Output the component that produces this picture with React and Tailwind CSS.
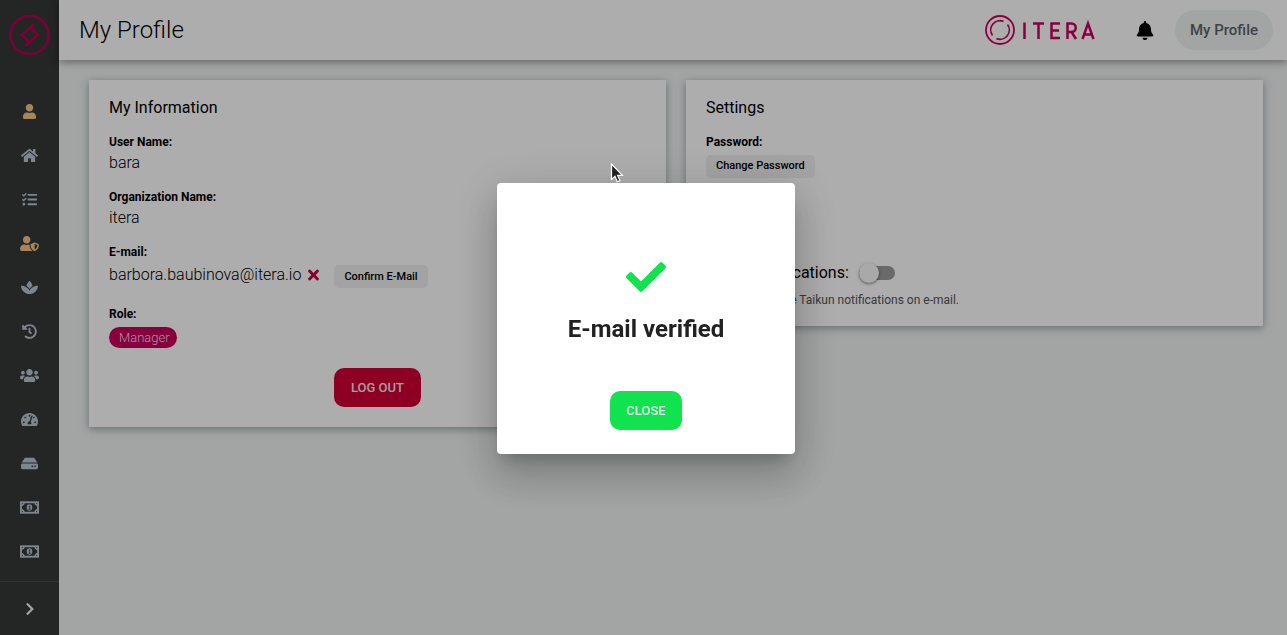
import { FaUser, FaHome, FaTasks, FaUserShield, FaHistory, FaUsers, FaTachometerAlt, FaHdd, FaBell, FaTimes, FaCheck, FaChevronRight } from 'react-icons/fa';

function Spa(props) {
  return (
    <svg viewBox="0 0 576 512" fill="currentColor" {...props}>
      <path d="M568.25 192c-29.04.13-135.01 6.16-213.84 83-33.12 29.63-53.36 63.3-66.41 94.86-13.05-31.56-33.29-65.23-66.41-94.86-78.83-76.84-184.8-82.87-213.84-83-4.41-.02-7.79 3.4-7.75 7.82.23 27.92 7.14 126.14 88.77 199.3C172.79 480.94 256 480 288 480s115.19.95 199.23-80.88c81.64-73.17 88.54-171.38 88.77-199.3.04-4.42-3.34-7.84-7.75-7.82zM287.98 302.6c12.82-18.85 27.6-35.78 44.09-50.52 19.09-18.61 39.58-33.3 60.26-45.18-16.44-70.5-51.72-133.05-96.73-172.22-4.11-3.58-11.02-3.58-15.14 0-44.99 39.14-80.27 101.63-96.74 172.07 20.37 11.7 40.5 26.14 59.22 44.39a282.768 282.768 0 0 1 45.04 51.46z" />
    </svg>
  );
}

function Money(props) {
  return (
    <svg viewBox="0 0 20 13" fill="none" stroke="currentColor" {...props}>
      <rect x="1" y="1" width="18" height="11" strokeWidth="2" />
      <path d="M1.500 4.200a3 3 0 0 0 2.700-2.700M18.500 4.200a3 3 0 0 1-2.700-2.700M1.500 8.800a3 3 0 0 1 2.700 2.700M18.500 8.800a3 3 0 0 0-2.700 2.700" strokeWidth="1.500" />
      <ellipse cx="10" cy="6.500" rx="2.900" ry="3.400" fill="currentColor" stroke="none" />
      <path d="M9.200 5.200 10.200 4.700V8.300M9 8.400h2.200" stroke="#353837" strokeWidth="0.900" />
    </svg>
  );
}

const navItems = [
  { label: 'Profile', Icon: FaUser, size: 'h-[15px] w-[15px]', active: true },
  { label: 'Home', Icon: FaHome, size: 'h-[17px] w-[17px]' },
  { label: 'Projects', Icon: FaTasks, size: 'h-[15px] w-[15px]' },
  { label: 'Access', Icon: FaUserShield, size: 'h-[15px] w-[19px]', active: true },
  { label: 'Catalog', Icon: Spa, size: 'h-[15px] w-[17px]' },
  { label: 'History', Icon: FaHistory, size: 'h-[15px] w-[15px]' },
  { label: 'Users', Icon: FaUsers, size: 'h-[15px] w-[19px]' },
  { label: 'Quotas', Icon: FaTachometerAlt, size: 'h-[17px] w-[17px]' },
  { label: 'Storage', Icon: FaHdd, size: 'h-[17px] w-[17px]' },
  { label: 'Billing', Icon: Money, size: 'h-[13px] w-[19px]' },
  { label: 'Prices', Icon: Money, size: 'h-[13px] w-[19px]' },
];

function Sidebar() {
  return (
    <aside className="flex w-[59px] shrink-0 flex-col bg-[#353837] text-[#bac5d0]">
      <a href="#" aria-label="Taikun" className="mx-auto mt-[14px] block">
        <svg className="h-[42px] w-[41px]" viewBox="0 0 42 42" fill="none" stroke="#b80052">
          <circle cx="21" cy="21" r="19.500" strokeWidth="2.600" />
          <path d="M25.500 10 21.500 13.500 13 20.800 20 27.500M17 32 21 28.500 29.500 20.800 22.500 14" strokeWidth="2.600" />
        </svg>
      </a>
      <nav className="mt-[33px] flex flex-col">
        {navItems.map(({ label, Icon, size, active }) => (
          <a key={label} href="#" aria-label={label} className={`flex h-11 items-center justify-center ${active ? 'text-[#f4c587]' : ''}`}>
            <Icon className={size} />
          </a>
        ))}
      </nav>
      <button aria-label="Expand menu" className="mt-auto flex h-[54px] items-center justify-center border-t border-[#464a4a] text-[#eef2f6]">
        <FaChevronRight className="h-[14px] w-[14px]" />
      </button>
    </aside>
  );
}

function IteraLogo() {
  return (
    <svg className="h-[30px] w-[110px]" viewBox="0 0 110 30" fill="none" stroke="#cc005c" role="img" aria-label="Itera">
      <circle cx="15" cy="15" r="14" strokeWidth="1.800" />
      <path d="M18.500 6.400A9.300 9.300 0 0 0 7.500 20.500M11.500 23.600A9.300 9.300 0 0 0 22.500 9.500" strokeWidth="1.700" />
      <path d="M39.500 7.500v16.500M48 8.500h11M53.500 8.500v15.500M75 8.500h-8.500v14.500H75M66.500 15.500h7.500M82.500 24V8.500h4a4 4 0 0 1 0 8.500h-4M86.500 17l4.500 7M97.500 24l5.500-15.500L108.500 24M99.500 19.500h7" strokeWidth="2.500" />
    </svg>
  );
}

function Header() {
  return (
    <header className="z-10 flex h-15 shrink-0 items-center bg-white pr-[14px] pl-5 shadow-[0_2px_8px_rgba(0,0,0,0.4)]">
      <h1 className="text-2xl font-light text-black">My Profile</h1>
      <div className="ml-auto flex items-center">
        <IteraLogo />
        <button aria-label="Notifications" className="ml-[41px] text-black">
          <FaBell className="h-[19px] w-[18px]" />
        </button>
        <button className="ml-[21px] h-10 rounded-full bg-[#f0f3f4] px-[15px] text-[15px] font-medium text-[#5c6466]">My Profile</button>
      </div>
    </header>
  );
}

function Card({ title, children }) {
  return (
    <section className="bg-white px-5 pt-4 shadow-[0_2px_8px_rgba(60,80,80,0.5)]">
      <h2 className="text-base leading-6 text-black">{title}</h2>
      {children}
    </section>
  );
}

const termStyle = 'text-xs leading-4 font-bold text-black';
const valueStyle = 'text-base leading-6 font-light text-black';
const smallButton = 'h-[23px] rounded-[5px] bg-[#f0f0f0] px-[10px] text-[11px] font-medium text-black';

function Information() {
  return (
    <Card title="My Information">
      <dl className="mt-[14px] flex flex-col gap-[14px]">
        <div>
          <dt className={termStyle}>User Name:</dt>
          <dd className={`${valueStyle} pt-px`}>bara</dd>
        </div>
        <div>
          <dt className={termStyle}>Organization Name:</dt>
          <dd className={`${valueStyle} pt-px`}>itera</dd>
        </div>
        <div>
          <dt className={termStyle}>E-mail:</dt>
          <dd className={`${valueStyle} flex items-start pt-[3px]`}>
            barbora.baubinova@itera.io
            <FaTimes className="mt-[4px] ml-[6px] h-4 w-[13px] text-[#c80046]" aria-label="Not verified" />
            <button className={`${smallButton} mt-[2px] mb-[4px] ml-[14px]`}>Confirm E-Mail</button>
          </dd>
        </div>
        <div>
          <dt className={termStyle}>Role:</dt>
          <dd className="pt-[5px]">
            <span className="flex h-[21px] w-fit items-center rounded-full bg-[#c8005a] pr-[7px] pl-[10px] text-[13px] font-light text-[#ffd6ea]">Manager</span>
          </dd>
        </div>
      </dl>
      <div className="flex justify-center py-5">
        <button className="h-[39px] rounded-[10px] bg-[#d20034] px-[17px] text-[13px] font-medium text-[#fbe3ea]">LOG OUT</button>
      </div>
    </Card>
  );
}

function Settings() {
  return (
    <Card title="Settings">
      <div className="mt-[14px] text-xs leading-4 font-bold text-black">Password:</div>
      <button className={`${smallButton} mt-[5px] block`}>Change Password</button>
      <label className="mt-[83px] flex items-center text-base leading-6 text-black">
        E-mail Notifications:
        <input type="checkbox" role="switch" className="peer sr-only" />
        <span className="ml-[10px] flex h-5 w-9 items-center">
          <span className="flex h-[14px] w-full items-center rounded-full bg-[#9c9c9c]">
            <span className="h-5 w-5 rounded-full bg-[#fafafa] shadow-[0_1px_3px_rgba(0,0,0,0.5)]" />
          </span>
        </span>
      </label>
      <p className="pt-[7px] pb-[18px] text-xs leading-4 text-[#555]">Enable to receive Taikun notifications on e-mail.</p>
    </Card>
  );
}

function VerifiedDialog() {
  return (
    <div className="fixed inset-0 z-20 flex items-center justify-center bg-black/32 pt-0.5 pl-[5px]">
      <div role="dialog" aria-modal="true" aria-labelledby="dialog-title" className="flex w-[298px] flex-col items-center rounded bg-white pt-[74px] pb-6 shadow-[0_11px_15px_-7px_rgba(0,0,0,0.2),0_24px_38px_3px_rgba(0,0,0,0.14),0_9px_46px_8px_rgba(0,0,0,0.12)]">
        <FaCheck className="h-10 w-10 text-[#11e34f]" />
        <h2 id="dialog-title" className="mt-4 text-2xl leading-8 font-bold text-[#212121]">E-mail verified</h2>
        <button className="mt-[46px] h-[39px] rounded-[10px] bg-[#11e34f] px-4 text-[13px] font-medium text-[#e6fced]">CLOSE</button>
      </div>
    </div>
  );
}

export default function App() {
  return (
    <div className="flex min-h-screen bg-[#f0f3f3] font-[Roboto,sans-serif]">
      <Sidebar />
      <div className="flex min-w-0 flex-1 flex-col">
        <Header />
        <main className="grid grid-cols-2 items-start gap-5 py-5 pr-6 pl-[30px]">
          <Information />
          <Settings />
        </main>
      </div>
      <VerifiedDialog />
      <svg className="pointer-events-none fixed top-[163px] left-[610px] z-30 h-5 w-[14px]" viewBox="0 0 14 20" aria-hidden="true">
        <path d="M1.500 1v15.500l3.500-3.200 2.300 5.400 2.600-1.100-2.300-5.300h4.800z" fill="#222" stroke="#fff" strokeWidth="1.200" />
      </svg>
    </div>
  );
}
